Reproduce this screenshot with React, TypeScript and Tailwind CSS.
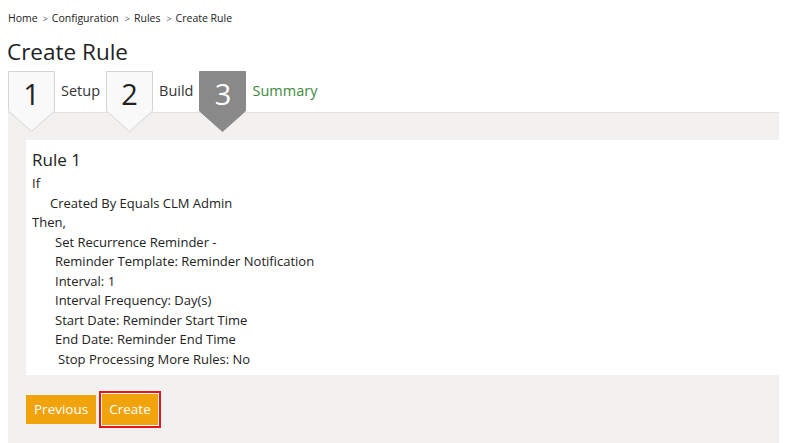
const steps = [
  { n: "1", label: "Setup", active: false },
  { n: "2", label: "Build", active: false },
  { n: "3", label: "Summary", active: true },
];

const lines = [
  { text: "If", indent: "pl-0" },
  { text: "Created By Equals CLM Admin", indent: "pl-[18px]" },
  { text: "Then,", indent: "pl-0" },
  { text: "Set Recurrence Reminder -", indent: "pl-[23px]" },
  { text: "Reminder Template: Reminder Notification", indent: "pl-[23px]" },
  { text: "Interval: 1", indent: "pl-[23px]" },
  { text: "Interval Frequency: Day(s)", indent: "pl-[23px]" },
  { text: "Start Date: Reminder Start Time", indent: "pl-[23px]" },
  { text: "End Date: Reminder End Time", indent: "pl-[23px]" },
  { text: "Stop Processing More Rules: No", indent: "pl-[26px]" },
];

const StepMarker = ({ n, active }: { n: string; active: boolean }) => {
  return (
    <div className="relative z-10 w-[47px] h-[61px] -mb-[20px] shrink-0">
      <svg width="47" height="61" viewBox="0 0 47 61" className="absolute inset-0">
        <path
          d="M0.5 0.5 H46.5 V40 L23.5 60.5 L0.5 40 Z"
          fill={active ? "#898989" : "#f9f9f9"}
          stroke={active ? "#898989" : "#d4d4d4"}
        />
      </svg>
      <span
        className={`relative block text-center text-[29px] leading-none pt-[8px] ${
          active ? "text-white" : "text-[#222]"
        }`}
      >
        {n}
      </span>
    </div>
  );
};

const App = () => {
  return (
    <div className="w-[791px] h-[443px] bg-white overflow-hidden font-['Open_Sans',sans-serif] text-[#333]">
      {/* ===== Breadcrumb ===== */}
      <div className="pl-[8px] pt-[10px] h-[28px] text-[10.5px] text-[#222] flex items-center gap-[4px]">
        <span>Home</span>
        <span className="text-[9px] text-[#555] ml-[1px]">&gt;</span>
        <span>Configuration</span>
        <span className="text-[9px] text-[#555] ml-[2px]">&gt;</span>
        <span>Rules</span>
        <span className="text-[9px] text-[#555] ml-[2px]">&gt;</span>
        <span>Create Rule</span>
      </div>

      {/* ===== Title ===== */}
      <h1 className="pl-[7px] pt-[9px] h-[43px] text-[22.5px] leading-[30px] text-[#222]">
        Create Rule
      </h1>

      {/* ===== Steps ===== */}
      <div className="flex items-start pl-[8px] h-[41px]">
        {steps.map((s) => (
          <div key={s.n} className="flex items-start">
            <StepMarker n={s.n} active={s.active} />
            <span
              className={`pt-[9px] pl-[6px] pr-[6px] text-[14.5px] ${
                s.active ? "text-[#3c8a3c]" : "text-[#333]"
              }`}
            >
              {s.label}
            </span>
          </div>
        ))}
      </div>

      {/* ===== Panel ===== */}
      <div className="ml-[8px] w-[771px] bg-[#f2f1f0] border-t border-[#e2e2e2] pt-[27px] pl-[18px] pb-[15px]">
        <div className="bg-white pl-[6px] pt-[8px] h-[235px]">
          <div className="text-[17px] leading-[24px] text-[#222]">Rule 1</div>
          <div className="text-[13px] leading-[19.5px] text-[#222] mt-[2px]">
            {lines.map((l, i) => (
              <div key={i} className={l.indent}>
                {l.text}
              </div>
            ))}
          </div>
        </div>

        <div className="flex items-center mt-[16px] gap-[3px]">
          <button className="h-[29px] px-[7px] bg-[#f0a30a] text-white text-[13.5px] border border-[#f0a30a]">
            Previous
          </button>
          <div className="border-[2px] border-[#e8141a] p-[1px] bg-white">
            <button className="h-[31px] px-[6px] bg-[#f0a30a] text-white text-[13.5px] border border-[#f0a30a] block">
              Create
            </button>
          </div>
        </div>
      </div>
    </div>
  );
};

export default App;
